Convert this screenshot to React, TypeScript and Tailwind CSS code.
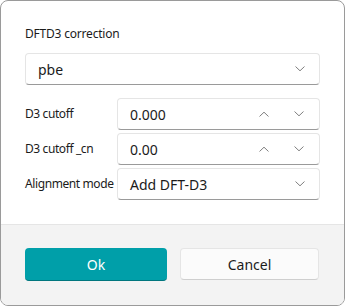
import React from "react";

const font = { fontFamily: '"Segoe UI", "Noto Sans", "Open Sans", sans-serif' };

function ChevronDown() {
  return (
    <svg width="10" height="6" viewBox="0 0 10 6" fill="none" className="block">
      <path d="M0.8 0.8 L5 4.8 L9.2 0.8" stroke="#707070" strokeWidth="0.9" strokeLinecap="round" />
    </svg>
  );
}

function ChevronUp() {
  return (
    <svg width="10" height="6" viewBox="0 0 10 6" fill="none" className="block">
      <path d="M0.8 5.2 L5 1.2 L9.2 5.2" stroke="#707070" strokeWidth="0.9" strokeLinecap="round" />
    </svg>
  );
}

function Combo({ value, className = "" }: { value: string; className?: string }) {
  return (
    <div
      className={`flex h-[32px] items-center justify-between rounded-[4px] border border-[#e5e5e5] border-b-[#9a9a9a] bg-white pl-[12px] pr-[14px] ${className}`}
    >
      <span className="text-[14px] text-[#1b1b1b]">{value}</span>
      <ChevronDown />
    </div>
  );
}

function Spin({ value }: { value: string }) {
  return (
    <div className="flex h-[32px] flex-1 items-center rounded-[4px] border border-[#e5e5e5] border-b-[#9a9a9a] bg-white pl-[12px] pr-[15px]">
      <span className="flex-1 text-[14px] text-[#1b1b1b]">{value}</span>
      <div className="flex items-center gap-[25px]">
        <ChevronUp />
        <ChevronDown />
      </div>
    </div>
  );
}

const label = "w-[92px] whitespace-nowrap text-[12px] tracking-[-0.4px] text-[#1b1b1b]";

export default function App() {
  return (
    <div
      style={font}
      className="flex h-[306px] w-[345px] flex-col overflow-hidden rounded-[8px] border border-[#9a9a9a] bg-white"
    >
      <div className="flex flex-1 flex-col px-[24px] pt-[25px]">
        <div className="text-[12px] leading-[16px] tracking-[-0.2px] text-[#1b1b1b]">DFTD3 correction</div>
        <Combo value="pbe" className="mt-[11px]" />
        <div className="mt-[13px] flex flex-col gap-[3px]">
          <div className="flex items-center">
            <span className={label}>D3 cutoff</span>
            <Spin value="0.000" />
          </div>
          <div className="flex items-center">
            <span className={label}>D3 cutoff _cn</span>
            <Spin value="0.00" />
          </div>
          <div className="flex items-center">
            <span className={label}>Alignment mode</span>
            <Combo value="Add DFT-D3" className="flex-1" />
          </div>
        </div>
      </div>
      <div className="flex h-[81px] gap-[13px] border-t border-[#e5e5e5] bg-[#f3f3f3] px-[24px] pt-[23px]">
        <button className="h-[33px] w-[142px] rounded-[4px] border-b border-b-[#00767e] bg-[#009fa9] text-[14px] text-white">
          Ok
        </button>
        <button className="h-[32px] w-[139px] rounded-[4px] border border-[#e5e5e5] border-b-[#cfcfcf] bg-[#fbfbfb] text-[14px] text-[#1b1b1b]">
          Cancel
        </button>
      </div>
    </div>
  );
}
